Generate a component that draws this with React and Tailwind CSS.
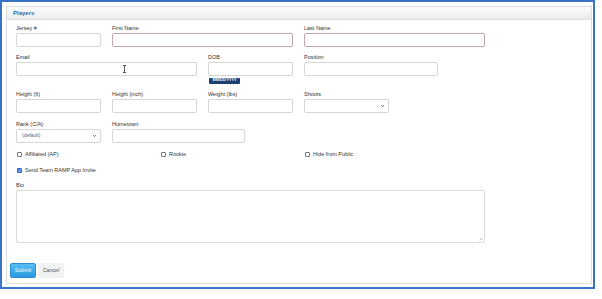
import React from 'react';

const font = { fontFamily: '"Liberation Sans", Arial, sans-serif' };

function Label({ children }) {
  return (
    <div className="h-[9px] leading-[9px] text-[5.5px] text-[#333] whitespace-nowrap">
      {children}
    </div>
  );
}

function Input({ w = 'w-[85px]', error = false }) {
  return (
    <div
      className={`${w} h-[14px] rounded-[2px] border bg-white ${
        error ? 'border-[#c2a4a8]' : 'border-[#d6d6d6]'
      }`}
    />
  );
}

function Select({ w = 'w-[85px]', value = '' }) {
  return (
    <div
      className={`${w} h-[14px] rounded-[2px] border border-[#d6d6d6] bg-white flex items-center justify-between pl-[5px] pr-[3px]`}>
      <span className="text-[5px] text-[#666]">{value}</span>
      <svg width="5" height="4" viewBox="0 0 5 4">
        <path d="M1 1 L2.5 2.6 L4 1" fill="none" stroke="#555" strokeWidth="0.8" />
      </svg>
    </div>
  );
}

function Check({ label, checked = false }) {
  return (
    <div className="flex items-center gap-[3px] h-[8px]">
      {checked ? (
        <div className="w-[5px] h-[5px] rounded-[1px] bg-[#2f6fd6] flex items-center justify-center">
          <svg width="5" height="5" viewBox="0 0 5 5">
            <path d="M1.1 2.6 L2.1 3.6 L3.9 1.3" fill="none" stroke="#fff" strokeWidth="0.8" />
          </svg>
        </div>
      ) : (
        <div className="w-[5px] h-[5px] rounded-[1px] border border-[#777] bg-white" />
      )}
      <span className="text-[5.5px] leading-none text-[#333] whitespace-nowrap translate-y-[0.5px]">{label}</span>
    </div>
  );
}

export default function App() {
  return (
    <div className="w-[602px] h-[299px] bg-white" style={font}>
      <div className="relative w-[595px] h-[289px] border-2 border-[#3b74c4] pt-[4px] pl-[4px] pr-[1px] pb-[3px]">
        <div className="h-full border border-[#dedede] bg-white flex flex-col">
          <div className="h-[13px] border-b border-[#dedede] bg-gradient-to-b from-[#fdfdfd] to-[#ebebeb] flex items-center pl-[6px]">
            <span className="text-[6px] font-bold text-[#2f6fb0]">Players</span>
          </div>

          <div className="pl-[9px] pt-[4px]">
            {/* row 1 */}
            <div className="flex">
              <div className="w-[96px]">
                <Label>Jersey #</Label>
                <Input />
              </div>
              <div className="w-[192px]">
                <Label>First Name</Label>
                <Input w="w-[181px]" error />
              </div>
              <div className="w-[192px]">
                <Label>Last Name</Label>
                <Input w="w-[181px]" error />
              </div>
            </div>

            {/* row 2 */}
            <div className="flex mt-[6px]">
              <div className="w-[192px]">
                <Label>Email</Label>
                <Input w="w-[181px]" />
              </div>
              <div className="w-[96px]">
                <Label>DOB</Label>
                <Input />
                <div className="mt-[2px] ml-[1px] w-[31px] h-[6px] rounded-[1px] bg-[#1b3f73] flex items-center justify-center">
                  <span className="text-[3.8px] font-bold text-white leading-none">MM/DD/YYYY</span>
                </div>
              </div>
              <div className="w-[192px]">
                <Label>Position</Label>
                <Input w="w-[134px]" />
              </div>
            </div>

            {/* row 3 */}
            <div className="flex mt-[6px]">
              <div className="w-[96px]">
                <Label>Height (ft)</Label>
                <Input />
              </div>
              <div className="w-[96px]">
                <Label>Height (inch)</Label>
                <Input />
              </div>
              <div className="w-[96px]">
                <Label>Weight (lbs)</Label>
                <Input />
              </div>
              <div className="w-[96px]">
                <Label>Shoots</Label>
                <Select />
              </div>
            </div>

            {/* row 4 */}
            <div className="flex mt-[7px]">
              <div className="w-[96px]">
                <Label>Rank (C/A)</Label>
                <Select value="(default)" />
              </div>
              <div className="w-[192px]">
                <Label>Hometown</Label>
                <Input w="w-[133px]" />
              </div>
            </div>

            {/* checkboxes */}
            <div className="flex mt-[7px] pl-[1px]">
              <div className="w-[144px]">
                <Check label="Affiliated (AP)" />
              </div>
              <div className="w-[144px]">
                <Check label="Rookie" />
              </div>
              <div>
                <Check label="Hide from Public" />
              </div>
            </div>
            <div className="mt-[8px] pl-[1px]">
              <Check label="Send Team RAMP App Invite" checked />
            </div>

            {/* bio */}
            <div className="mt-[7px]">
              <Label>Bio</Label>
              <div className="relative w-[469px] h-[53px] rounded-[2px] border border-[#dcdcdc] bg-white">
                <svg className="absolute right-[1px] bottom-[1px]" width="4" height="4" viewBox="0 0 4 4">
                  <path d="M0.5 3.5 L3.5 0.5 M2 3.5 L3.5 2" stroke="#999" strokeWidth="0.5" />
                </svg>
              </div>
            </div>
          </div>

          {/* buttons */}
          <div className="flex gap-[2px] pl-[3px] mt-[20px]">
            <div className="w-[26px] h-[15px] rounded-[2px] border border-[#2a8fd6] bg-gradient-to-b from-[#56bdf2] to-[#2b98e0] flex items-center justify-center">
              <span className="text-[5.3px] text-white">Submit</span>
            </div>
            <div className="w-[26px] h-[15px] rounded-[2px] bg-[#f2f2f2] flex items-center justify-center">
              <span className="text-[5.3px] text-[#555]">Cancel</span>
            </div>
          </div>
        </div>

        {/* text cursor */}
        <svg className="absolute left-[120px] top-[63px]" width="5" height="8" viewBox="0 0 5 8">
          <path d="M1 0.5 H4 M2.5 0.5 V7.5 M1 7.5 H4" stroke="#333" strokeWidth="0.8" fill="none" />
        </svg>
      </div>
    </div>
  );
}
